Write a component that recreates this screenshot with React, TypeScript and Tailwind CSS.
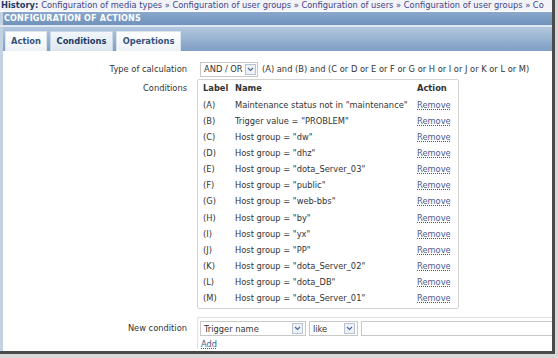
import React from 'react';

const conditions: [string, string][] = [
  ['(A)', 'Maintenance status not in "maintenance"'],
  ['(B)', 'Trigger value = "PROBLEM"'],
  ['(C)', 'Host group = "dw"'],
  ['(D)', 'Host group = "dhz"'],
  ['(E)', 'Host group = "dota_Server_03"'],
  ['(F)', 'Host group = "public"'],
  ['(G)', 'Host group = "web-bbs"'],
  ['(H)', 'Host group = "by"'],
  ['(I)', 'Host group = "yx"'],
  ['(J)', 'Host group = "PP"'],
  ['(K)', 'Host group = "dota_Server_02"'],
  ['(L)', 'Host group = "dota_DB"'],
  ['(M)', 'Host group = "dota_Server_01"'],
];

function DropBtn() {
  return (
    <span className="flex h-[11px] w-[11px] shrink-0 items-center justify-center border border-[#b8c4d4] bg-[#eef2f7]">
      <svg width="7" height="5" viewBox="0 0 7 5">
        <path d="M1 1 L3.5 3.5 L6 1" fill="none" stroke="#4a6a9a" strokeWidth="1.2" />
      </svg>
    </span>
  );
}

function Select({ label, width }: { label: string; width: string }) {
  return (
    <div className={`flex h-[15px] items-center justify-between border border-[#c8c8c8] bg-white pl-[3px] pr-[2px] ${width}`}>
      <span className="whitespace-nowrap text-[#333]">{label}</span>
      <DropBtn />
    </div>
  );
}

export default function App() {
  return (
    <div
      className="relative h-[358px] w-[558px] overflow-hidden bg-[#d8d8d8] text-[8.3px] leading-none"
      style={{ fontFamily: '"DejaVu Sans", Verdana, sans-serif' }}
    >
      <div className="flex h-[354px] w-[555px] flex-col border-b-[3px] border-r-[3px] border-[#4a4a4a] bg-white">
        {/* history */}
        <div className="flex h-[11px] items-center whitespace-nowrap bg-[#f1f3f7] pl-[1px]">
          <span className="font-bold text-[#1f3a66]">History:</span>
          <span className="ml-[3px] text-[#44448a]">
            Configuration of media types » Configuration of user groups » Configuration of users » Configuration of user groups » Co
          </span>
        </div>

        {/* title bar */}
        <div className="mt-[1px] flex h-[13px] items-center border-l-[3px] border-[#c3d2e3] bg-gradient-to-b from-[#8aa8cc] to-[#6f92bc] pl-[1px]">
          <span className="text-[8px] font-bold tracking-[0.2px] text-white">CONFIGURATION OF ACTIONS</span>
        </div>
        <div className="h-[2px] bg-[#dfe7f0]" />

        {/* tabs */}
        <div className="flex h-[24px] items-end gap-[3px] border-l-[3px] border-[#c3d2e3] bg-gradient-to-b from-[#b4c8de] to-[#7e9ec4] pl-[2px]">
          <div className="flex h-[20px] w-[42px] items-center justify-center border border-b-0 border-[#dbe4ee] bg-gradient-to-b from-white to-[#eef2f7] font-bold text-[#34527c]">
            Action
          </div>
          <div className="flex h-[20px] w-[63px] items-center justify-center border border-b-0 border-[#c8d6e6] bg-gradient-to-b from-[#f2f6fa] to-[#dde6f0] font-bold text-[#1f3a66]">
            Conditions
          </div>
          <div className="flex h-[20px] w-[65px] items-center justify-center border border-b-0 border-[#dbe4ee] bg-gradient-to-b from-white to-[#eef2f7] font-bold text-[#34527c]">
            Operations
          </div>
        </div>

        {/* body */}
        <div className="flex flex-1 flex-col border-l-[3px] border-[#c3d2e3] pt-[10px] text-[#333]">
          {/* type of calculation */}
          <div className="flex h-[17px] items-center">
            <div className="w-[194px] pr-[10px] text-right">Type of calculation</div>
            <div className="ml-[3px] flex items-center">
              <Select label="AND / OR" width="w-[58px] gap-[2px]" />
              <span className="ml-[4px] whitespace-nowrap">
                (A) and (B) and (C or D or E or F or G or H or I or J or K or L or M)
              </span>
            </div>
          </div>

          {/* conditions */}
          <div className="mt-[1px] flex">
            <div className="w-[194px] pr-[10px] pt-[5px] text-right">Conditions</div>
            <div className="w-[262px] rounded-[2px] border border-[#d4d4d4] pb-[2px] pl-[5px]">
              <div className="flex h-[17px] items-center font-bold">
                <span className="w-[32px]">Label</span>
                <span className="w-[182px]">Name</span>
                <span>Action</span>
              </div>
              {conditions.map(([l, n]) => (
                <div key={l} className="flex h-[16.1px] items-center whitespace-nowrap">
                  <span className="w-[32px]">{l}</span>
                  <span className="w-[182px]">{n}</span>
                  <span className="text-[#4a5a8e] underline decoration-dotted underline-offset-[1px]">Remove</span>
                </div>
              ))}
            </div>
          </div>

          {/* new condition */}
          <div className="mt-[8px] flex">
            <div className="w-[194px] pr-[10px] pt-[7px] text-right">New condition</div>
            <div className="flex-1 border-l border-t border-[#e2e2e2] pl-[2px] pt-[3px]">
              <div className="flex items-center gap-[3px]">
                <Select label="Trigger name" width="w-[106px]" />
                <Select label="like" width="w-[49px]" />
                <div className="h-[15px] flex-1 border border-r-0 border-[#c8c8c8] bg-white" />
              </div>
              <div className="mt-[4px] pl-[1px] text-[#4a5a8e] underline decoration-dotted underline-offset-[1px]">Add</div>
            </div>
          </div>
        </div>
      </div>
    </div>
  );
}
